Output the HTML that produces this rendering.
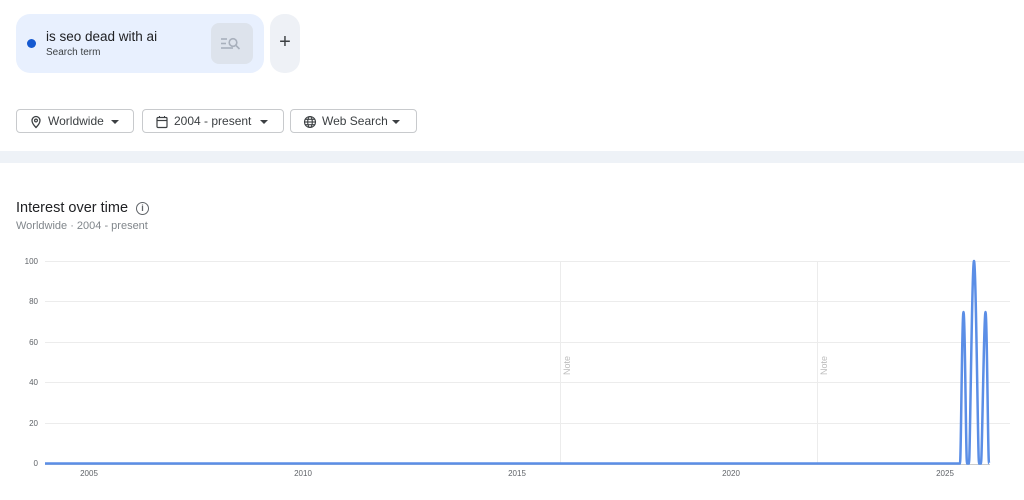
<!DOCTYPE html>
<html><head><meta charset="utf-8"><style>
*{box-sizing:border-box;margin:0;padding:0}
body{width:1024px;height:500px;background:#fff;font-family:"Liberation Sans",Arial,sans-serif;color:#202124;position:relative;overflow:hidden}
.term{position:absolute;left:16px;top:14px;width:248px;height:59px;background:#e8f0fe;border-radius:14px}
.dot{position:absolute;left:27px;top:39px;width:9px;height:9px;border-radius:50%;background:#1a56db;background:#1559d0}
.t1{position:absolute;left:46px;top:29px;font-size:13.5px;color:#202124}
.t2{position:absolute;left:46px;top:47px;font-size:10px;color:#3c4043}
.sbtn{position:absolute;left:211px;top:23px;width:42px;height:41px;border-radius:8px;background:#dde3ec}
.plus{position:absolute;left:270px;top:14px;width:30px;height:59px;border-radius:14px;background:#eef1f6;font-size:20px;text-align:center;line-height:57px;color:#3c4043}
.dd{position:absolute;top:109px;height:24px;border:1px solid #c8cacd;border-radius:4px;font-size:12px;color:#3c4043;line-height:22px}
.dd svg{position:absolute;top:5px}
.dd span{position:absolute;top:0}
.band{position:absolute;left:0;top:151px;width:1024px;height:12px;background:#eef2f7}
.h{position:absolute;left:16px;top:200px;font-size:14.5px;color:#202124}
.sub{position:absolute;left:16px;top:220px;font-size:11px;color:#80868b}
.info{position:absolute;left:136px;top:202px;width:13px;height:13px;border:1.3px solid #5f6368;border-radius:50%;font-size:9px;text-align:center;line-height:11px;color:#5f6368;font-weight:bold}
</style></head><body>
<div class="term"></div>
<div class="dot"></div>
<div class="t1">is seo dead with ai</div>
<div class="t2">Search term</div>
<div class="sbtn"><svg width="42" height="41" viewBox="0 0 42 41"><g stroke="#a8b0bc" stroke-width="1.6" fill="none"><line x1="10" y1="16" x2="16" y2="16"/><line x1="10" y1="20.5" x2="15" y2="20.5"/><line x1="10" y1="25" x2="22" y2="25"/><circle cx="22" cy="19.5" r="3.8"/><line x1="25" y1="22.5" x2="28.5" y2="26"/></g></svg></div>
<div class="plus">+</div>

<div class="dd" style="left:16px;width:118px"><svg width="14" height="14" viewBox="0 0 14 14" style="left:12px"><path d="M7 1.5a4 4 0 0 0-4 4c0 3 4 7 4 7s4-4 4-7a4 4 0 0 0-4-4z" fill="none" stroke="#3c4043" stroke-width="1.3"/><circle cx="7" cy="5.5" r="1.4" fill="none" stroke="#3c4043" stroke-width="1.2"/></svg><span style="left:31px">Worldwide</span><svg width="10" height="6" viewBox="0 0 10 6" style="left:93px;top:9px"><path d="M1 1h8L5 5z" fill="#3c4043"/></svg></div>
<div class="dd" style="left:142px;width:142px"><svg width="14" height="14" viewBox="0 0 14 14" style="left:12px"><rect x="2" y="2.5" width="10" height="10" rx="1" fill="none" stroke="#3c4043" stroke-width="1.2"/><line x1="2" y1="5.5" x2="12" y2="5.5" stroke="#3c4043" stroke-width="1.2"/><line x1="4.5" y1="1" x2="4.5" y2="3" stroke="#3c4043"/><line x1="9.5" y1="1" x2="9.5" y2="3" stroke="#3c4043"/></svg><span style="left:31px">2004 - present</span><svg width="10" height="6" viewBox="0 0 10 6" style="left:116px;top:9px"><path d="M1 1h8L5 5z" fill="#3c4043"/></svg></div>
<div class="dd" style="left:290px;width:127px"><svg width="14" height="14" viewBox="0 0 14 14" style="left:12px"><g fill="none" stroke="#3c4043" stroke-width="1.1"><circle cx="7" cy="7" r="5.5"/><ellipse cx="7" cy="7" rx="2.3" ry="5.5"/><line x1="1.5" y1="7" x2="12.5" y2="7"/><line x1="2.3" y1="4.3" x2="11.7" y2="4.3"/><line x1="2.3" y1="9.7" x2="11.7" y2="9.7"/></g></svg><span style="left:31px">Web Search</span><svg width="10" height="6" viewBox="0 0 10 6" style="left:100px;top:9px"><path d="M1 1h8L5 5z" fill="#3c4043"/></svg></div>

<div class="band"></div>
<div class="h">Interest over time</div>
<div class="info">i</div>
<div class="sub">Worldwide · 2004 - present</div>

<svg width="1024" height="500" style="position:absolute;left:0;top:0" font-family="Liberation Sans, sans-serif">
<g stroke="#ececec" stroke-width="1">
<line x1="45" y1="261.5" x2="1010" y2="261.5"/><line x1="45" y1="301.5" x2="1010" y2="301.5"/><line x1="45" y1="342.5" x2="1010" y2="342.5"/><line x1="45" y1="382.5" x2="1010" y2="382.5"/><line x1="45" y1="423.5" x2="1010" y2="423.5"/>
<line x1="560.5" y1="261" x2="560.5" y2="463"/><line x1="817.5" y1="261" x2="817.5" y2="463"/>
</g>
<line x1="45" y1="464.5" x2="990" y2="464.5" stroke="#ccc"/>
<g font-size="8" fill="#5f6368" text-anchor="end">
<text x="38" y="264">100</text><text x="38" y="304">80</text><text x="38" y="345">60</text><text x="38" y="385">40</text><text x="38" y="426">20</text><text x="38" y="466">0</text>
</g>
<g font-size="8" fill="#5f6368" text-anchor="middle">
<text x="89" y="476">2005</text><text x="303" y="476">2010</text><text x="517" y="476">2015</text><text x="731" y="476">2020</text><text x="945" y="476">2025</text>
</g>
<g font-size="9" fill="#bdbdbd"><text transform="translate(570,375) rotate(-90)">Note</text><text transform="translate(827,375) rotate(-90)">Note</text></g>
<path d="M45 463.5 L960 463.5 C961 463 962 312 963.5 312 C965 312 966 463 967 463.5 L969 463.5 C970 463 972 261 974 261 C976 261 978 463 979 463.5 L981 463.5 C982 463 984 312 985.5 312 C987 312 988 463 989 463.5" fill="none" stroke="#5b8ee6" stroke-width="2.5"/>
</svg>
</body></html>
